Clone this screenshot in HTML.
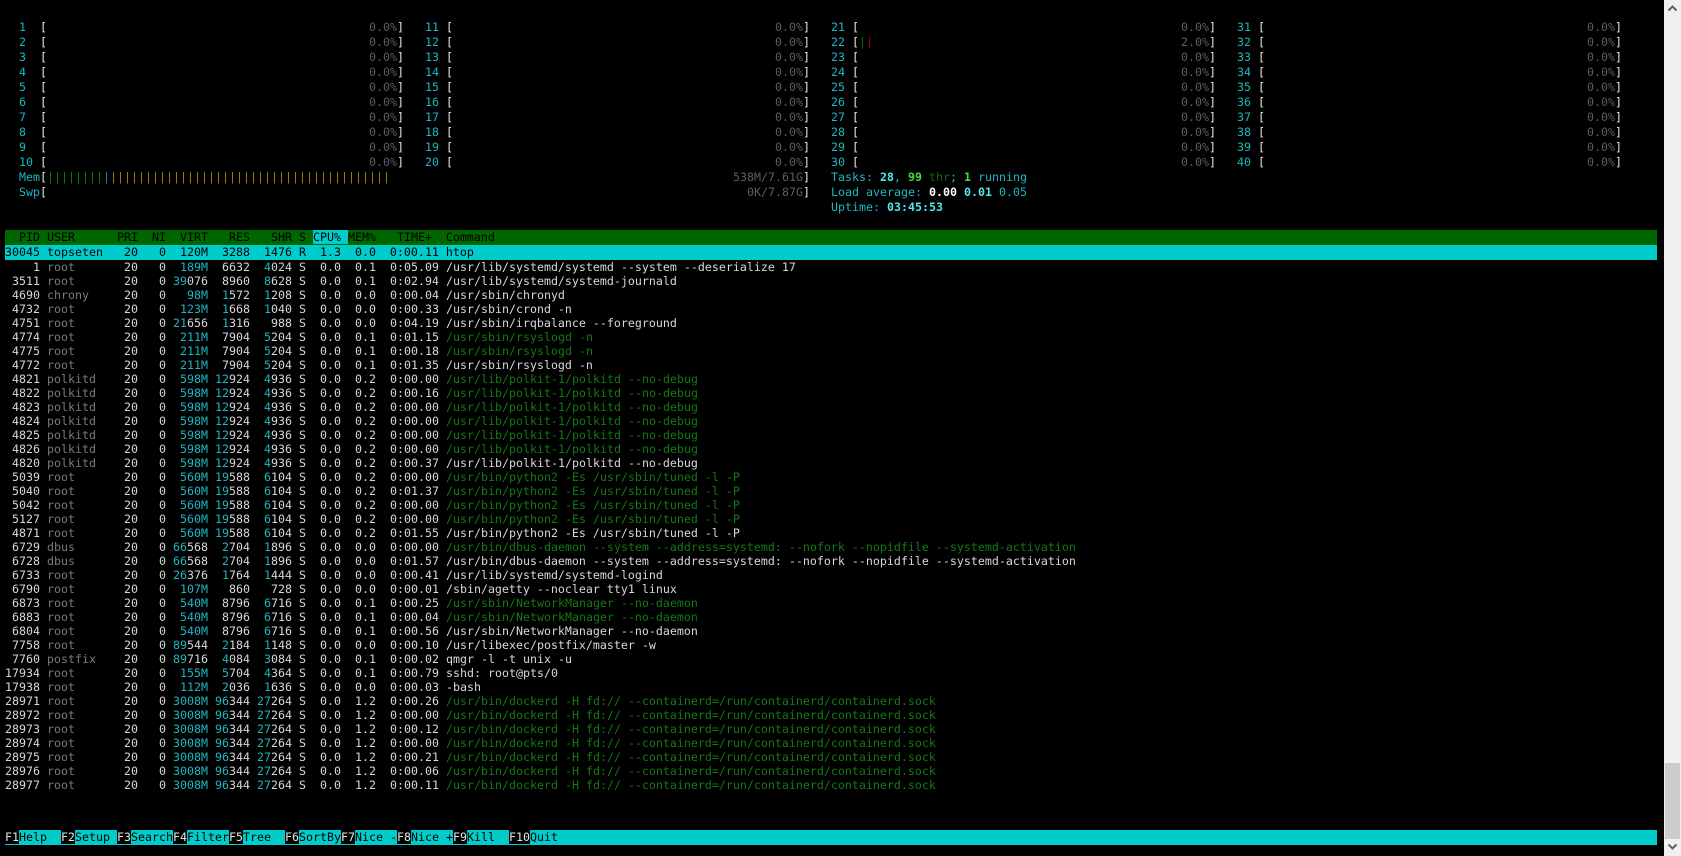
<!DOCTYPE html>
<html><head><meta charset="utf-8">
<style>
html,body{margin:0;padding:0;background:#000;width:1681px;height:856px;overflow:hidden}
body{position:relative;font-family:"DejaVu Sans Mono","Liberation Mono",monospace;font-size:11.63px;color:#d8d8d8}
.row{position:absolute;left:5px;height:15px;line-height:15px;white-space:pre}
i{font-style:normal}
.a{position:absolute;top:0;white-space:pre}
.c{color:#1cb8c0}
.w{color:#e8e8e8}
.g{color:#5e5e5e}
.bc{color:#50e8ec;font-weight:bold}
.bw{color:#ffffff;font-weight:bold}
.bg{color:#40e040;font-weight:bold}
.dg{color:#0a6a0a}
.rd{color:#a00000}
.mg{color:#0a7a0a}
.mb{color:#2070e0}
.my{color:#a08000}
.u{color:#7a7a7a}
.v{color:#1ab8c0}
.t{color:#127a12}
pre{margin:0;position:absolute;left:5px;top:260px;line-height:15px;font:inherit;white-space:pre}
.hdr{background:#006600;color:#000;width:1652px}
.hc{background:#00cccc}
.sel{background:#00cccc;color:#000;width:1652px}
.ft{color:#e8e8e8}
.fl{background:#00cccc;color:#000}
.sb{position:absolute;left:1664px;top:0;width:17px;height:856px;background:#f0f0f0}
.th{position:absolute;left:1665px;top:763px;width:15px;height:76px;background:#cccccc}
</style></head><body>
<div id="m"></div>
<script>
(function(){
var out="";
var L=[19,425,831,1237],B=[40,446,852,1258],P=[369,775,1181,1587],E=[397,803,1209,1615];
for(var i=1;i<=10;i++){
 var top=20+15*(i-1);
 out+='<div class="row" style="top:'+top+'px;left:0">';
 for(var c=0;c<4;c++){
  var n=i+10*c;var pct="0.0%";var bars="";
  if(n==22){pct="2.0%";bars='<i class="a" style="left:'+(B[c]+7)+'px"><i class="dg">|</i><i class="rd">|</i></i>';}
  out+='<i class="a c" style="left:'+L[c]+'px">'+n+'</i><i class="a w" style="left:'+B[c]+'px">[</i>'+bars+'<i class="a g" style="left:'+P[c]+'px">'+pct+'</i><i class="a w" style="left:'+E[c]+'px">]</i>';
 }
 out+='</div>';
}
document.getElementById("m").outerHTML=out;
})();
</script>
<div class="row" style="top:170px;left:0"><i class="a c" style="left:19px">Mem</i><i class="a w" style="left:40px">[</i><i class="a" style="left:47px"><i class="mg">||||||||</i><i class="mb">|</i><i class="my">||||||||||||||||||||||||||||||||||||||||</i></i><i class="a g" style="left:733px">538M/7.61G</i><i class="a w" style="left:803px">]</i><i class="a" style="left:831px"><i class="c">Tasks: </i><i class="bc">28</i><i class="c">, </i><i class="bg">99</i><i class="dg"> thr</i><i class="c">; </i><i class="bg">1</i><i class="c"> running</i></i></div>
<div class="row" style="top:185px;left:0"><i class="a c" style="left:19px">Swp</i><i class="a w" style="left:40px">[</i><i class="a g" style="left:747px">0K/7.87G</i><i class="a w" style="left:803px">]</i><i class="a" style="left:831px"><i class="c">Load average: </i><i class="bw">0.00 </i><i class="bc">0.01 </i><i class="c">0.05</i></i></div>
<div class="row" style="top:200px;left:0"><i class="a" style="left:831px"><i class="c">Uptime: </i><i class="bc">03:45:53</i></i></div>
<div class="row hdr" style="top:230px">  PID USER      PRI  NI  VIRT   RES   SHR S <i class="hc">CPU% </i>MEM%   TIME+  Command</div>
<div class="row sel" style="top:245px">30045 topseten   20   0  120M  3288  1476 R  1.3  0.0  0:00.11 htop</div>
<pre>    1 <i class="u">root</i>       20   0  <i class="v">189M</i>  6632  <i class="v">4</i>024 S  0.0  0.1  0:05.09 /usr/lib/systemd/systemd --system --deserialize 17
 3511 <i class="u">root</i>       20   0 <i class="v">39</i>076  8960  <i class="v">8</i>628 S  0.0  0.1  0:02.94 /usr/lib/systemd/systemd-journald
 4690 <i class="u">chrony</i>     20   0   <i class="v">98M</i>  <i class="v">1</i>572  <i class="v">1</i>208 S  0.0  0.0  0:00.04 /usr/sbin/chronyd
 4732 <i class="u">root</i>       20   0  <i class="v">123M</i>  <i class="v">1</i>668  <i class="v">1</i>040 S  0.0  0.0  0:00.33 /usr/sbin/crond -n
 4751 <i class="u">root</i>       20   0 <i class="v">21</i>656  <i class="v">1</i>316   988 S  0.0  0.0  0:04.19 /usr/sbin/irqbalance --foreground
 4774 <i class="u">root</i>       20   0  <i class="v">211M</i>  7904  <i class="v">5</i>204 S  0.0  0.1  0:01.15 <i class="t">/usr/sbin/rsyslogd -n</i>
 4775 <i class="u">root</i>       20   0  <i class="v">211M</i>  7904  <i class="v">5</i>204 S  0.0  0.1  0:00.18 <i class="t">/usr/sbin/rsyslogd -n</i>
 4772 <i class="u">root</i>       20   0  <i class="v">211M</i>  7904  <i class="v">5</i>204 S  0.0  0.1  0:01.35 /usr/sbin/rsyslogd -n
 4821 <i class="u">polkitd</i>    20   0  <i class="v">598M</i> <i class="v">12</i>924  <i class="v">4</i>936 S  0.0  0.2  0:00.00 <i class="t">/usr/lib/polkit-1/polkitd --no-debug</i>
 4822 <i class="u">polkitd</i>    20   0  <i class="v">598M</i> <i class="v">12</i>924  <i class="v">4</i>936 S  0.0  0.2  0:00.16 <i class="t">/usr/lib/polkit-1/polkitd --no-debug</i>
 4823 <i class="u">polkitd</i>    20   0  <i class="v">598M</i> <i class="v">12</i>924  <i class="v">4</i>936 S  0.0  0.2  0:00.00 <i class="t">/usr/lib/polkit-1/polkitd --no-debug</i>
 4824 <i class="u">polkitd</i>    20   0  <i class="v">598M</i> <i class="v">12</i>924  <i class="v">4</i>936 S  0.0  0.2  0:00.00 <i class="t">/usr/lib/polkit-1/polkitd --no-debug</i>
 4825 <i class="u">polkitd</i>    20   0  <i class="v">598M</i> <i class="v">12</i>924  <i class="v">4</i>936 S  0.0  0.2  0:00.00 <i class="t">/usr/lib/polkit-1/polkitd --no-debug</i>
 4826 <i class="u">polkitd</i>    20   0  <i class="v">598M</i> <i class="v">12</i>924  <i class="v">4</i>936 S  0.0  0.2  0:00.00 <i class="t">/usr/lib/polkit-1/polkitd --no-debug</i>
 4820 <i class="u">polkitd</i>    20   0  <i class="v">598M</i> <i class="v">12</i>924  <i class="v">4</i>936 S  0.0  0.2  0:00.37 /usr/lib/polkit-1/polkitd --no-debug
 5039 <i class="u">root</i>       20   0  <i class="v">560M</i> <i class="v">19</i>588  <i class="v">6</i>104 S  0.0  0.2  0:00.00 <i class="t">/usr/bin/python2 -Es /usr/sbin/tuned -l -P</i>
 5040 <i class="u">root</i>       20   0  <i class="v">560M</i> <i class="v">19</i>588  <i class="v">6</i>104 S  0.0  0.2  0:01.37 <i class="t">/usr/bin/python2 -Es /usr/sbin/tuned -l -P</i>
 5042 <i class="u">root</i>       20   0  <i class="v">560M</i> <i class="v">19</i>588  <i class="v">6</i>104 S  0.0  0.2  0:00.00 <i class="t">/usr/bin/python2 -Es /usr/sbin/tuned -l -P</i>
 5127 <i class="u">root</i>       20   0  <i class="v">560M</i> <i class="v">19</i>588  <i class="v">6</i>104 S  0.0  0.2  0:00.00 <i class="t">/usr/bin/python2 -Es /usr/sbin/tuned -l -P</i>
 4871 <i class="u">root</i>       20   0  <i class="v">560M</i> <i class="v">19</i>588  <i class="v">6</i>104 S  0.0  0.2  0:01.55 /usr/bin/python2 -Es /usr/sbin/tuned -l -P
 6729 <i class="u">dbus</i>       20   0 <i class="v">66</i>568  <i class="v">2</i>704  <i class="v">1</i>896 S  0.0  0.0  0:00.00 <i class="t">/usr/bin/dbus-daemon --system --address=systemd: --nofork --nopidfile --systemd-activation</i>
 6728 <i class="u">dbus</i>       20   0 <i class="v">66</i>568  <i class="v">2</i>704  <i class="v">1</i>896 S  0.0  0.0  0:01.57 /usr/bin/dbus-daemon --system --address=systemd: --nofork --nopidfile --systemd-activation
 6733 <i class="u">root</i>       20   0 <i class="v">26</i>376  <i class="v">1</i>764  <i class="v">1</i>444 S  0.0  0.0  0:00.41 /usr/lib/systemd/systemd-logind
 6790 <i class="u">root</i>       20   0  <i class="v">107M</i>   860   728 S  0.0  0.0  0:00.01 /sbin/agetty --noclear tty1 linux
 6873 <i class="u">root</i>       20   0  <i class="v">540M</i>  8796  <i class="v">6</i>716 S  0.0  0.1  0:00.25 <i class="t">/usr/sbin/NetworkManager --no-daemon</i>
 6883 <i class="u">root</i>       20   0  <i class="v">540M</i>  8796  <i class="v">6</i>716 S  0.0  0.1  0:00.04 <i class="t">/usr/sbin/NetworkManager --no-daemon</i>
 6804 <i class="u">root</i>       20   0  <i class="v">540M</i>  8796  <i class="v">6</i>716 S  0.0  0.1  0:00.56 /usr/sbin/NetworkManager --no-daemon
 7758 <i class="u">root</i>       20   0 <i class="v">89</i>544  <i class="v">2</i>184  <i class="v">1</i>148 S  0.0  0.0  0:00.10 /usr/libexec/postfix/master -w
 7760 <i class="u">postfix</i>    20   0 <i class="v">89</i>716  <i class="v">4</i>084  <i class="v">3</i>084 S  0.0  0.1  0:00.02 qmgr -l -t unix -u
17934 <i class="u">root</i>       20   0  <i class="v">155M</i>  <i class="v">5</i>704  <i class="v">4</i>364 S  0.0  0.1  0:00.79 sshd: root@pts/0
17938 <i class="u">root</i>       20   0  <i class="v">112M</i>  <i class="v">2</i>036  <i class="v">1</i>636 S  0.0  0.0  0:00.03 -bash
28971 <i class="u">root</i>       20   0 <i class="v">3008M</i> <i class="v">96</i>344 <i class="v">27</i>264 S  0.0  1.2  0:00.26 <i class="t">/usr/bin/dockerd -H fd:// --containerd=/run/containerd/containerd.sock</i>
28972 <i class="u">root</i>       20   0 <i class="v">3008M</i> <i class="v">96</i>344 <i class="v">27</i>264 S  0.0  1.2  0:00.00 <i class="t">/usr/bin/dockerd -H fd:// --containerd=/run/containerd/containerd.sock</i>
28973 <i class="u">root</i>       20   0 <i class="v">3008M</i> <i class="v">96</i>344 <i class="v">27</i>264 S  0.0  1.2  0:00.12 <i class="t">/usr/bin/dockerd -H fd:// --containerd=/run/containerd/containerd.sock</i>
28974 <i class="u">root</i>       20   0 <i class="v">3008M</i> <i class="v">96</i>344 <i class="v">27</i>264 S  0.0  1.2  0:00.00 <i class="t">/usr/bin/dockerd -H fd:// --containerd=/run/containerd/containerd.sock</i>
28975 <i class="u">root</i>       20   0 <i class="v">3008M</i> <i class="v">96</i>344 <i class="v">27</i>264 S  0.0  1.2  0:00.21 <i class="t">/usr/bin/dockerd -H fd:// --containerd=/run/containerd/containerd.sock</i>
28976 <i class="u">root</i>       20   0 <i class="v">3008M</i> <i class="v">96</i>344 <i class="v">27</i>264 S  0.0  1.2  0:00.06 <i class="t">/usr/bin/dockerd -H fd:// --containerd=/run/containerd/containerd.sock</i>
28977 <i class="u">root</i>       20   0 <i class="v">3008M</i> <i class="v">96</i>344 <i class="v">27</i>264 S  0.0  1.2  0:00.11 <i class="t">/usr/bin/dockerd -H fd:// --containerd=/run/containerd/containerd.sock</i></pre>
<div class="row" style="top:830px;width:1652px;background:#00cccc"><i class="ft" style="background:#000">F1</i><i class="fl">Help  </i><i class="ft" style="background:#000">F2</i><i class="fl">Setup </i><i class="ft" style="background:#000">F3</i><i class="fl">Search</i><i class="ft" style="background:#000">F4</i><i class="fl">Filter</i><i class="ft" style="background:#000">F5</i><i class="fl">Tree  </i><i class="ft" style="background:#000">F6</i><i class="fl">SortBy</i><i class="ft" style="background:#000">F7</i><i class="fl">Nice -</i><i class="ft" style="background:#000">F8</i><i class="fl">Nice +</i><i class="ft" style="background:#000">F9</i><i class="fl">Kill  </i><i class="ft" style="background:#000">F10</i><i class="fl">Quit</i></div>
<div class="sb"></div>
<div class="th"></div>
<svg style="position:absolute;left:1667px;top:4px" width="11" height="8" viewBox="0 0 11 8"><path d="M1.5 6.5 L5.5 2.5 L9.5 6.5" stroke="#606060" stroke-width="2" fill="none"/></svg>
<svg style="position:absolute;left:1667px;top:843px" width="11" height="8" viewBox="0 0 11 8"><path d="M1.5 1.5 L5.5 5.5 L9.5 1.5" stroke="#606060" stroke-width="2" fill="none"/></svg>
</body></html>
